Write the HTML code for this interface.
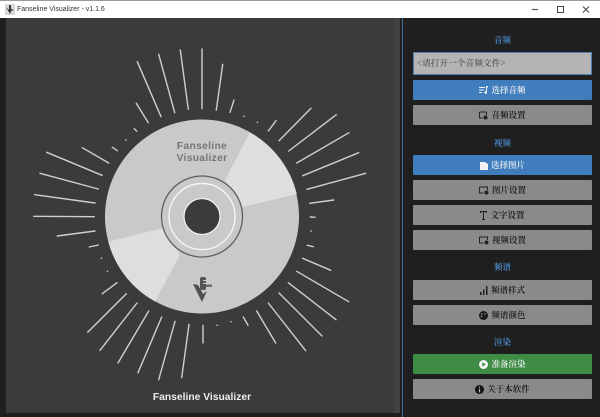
<!DOCTYPE html>
<html><head><meta charset="utf-8"><style>
html,body{margin:0;padding:0;width:600px;height:417px;overflow:hidden;background:#1f1f1f}
body{position:relative;font-family:"Liberation Sans","Noto Serif CJK SC",serif}
.a{position:absolute}
.tb{left:0;top:0;width:600px;height:18px;background:#fff;border-top:1px solid #9a9a9a;box-sizing:border-box}
.tt{left:17px;top:5px;font:7px/9px "Liberation Sans",sans-serif;color:#333;white-space:nowrap}
.h{left:413px;width:179px;text-align:center;font:600 8.500px/12px "Noto Serif CJK SC",serif;color:#4f94dc}
.b{left:413px;width:179px;height:20px;box-sizing:border-box;border-radius:1px;background:#8a8a8a;color:#111;display:flex;align-items:center;justify-content:center;font:600 8.500px/20px "Noto Serif CJK SC",serif;gap:3px;white-space:nowrap}
.b svg{display:block;flex:none}
.bl{background:#3f7dbd;color:#f2f2f2}
.gr{background:#3f8c47;color:#f2f2f2}
.in{left:413px;top:52px;width:179px;height:23px;box-sizing:border-box;background:#b4b4b4;border:1px solid #4f80b4;color:#4a4a4a;font:500 8.700px/21px "Noto Serif CJK SC",serif;padding-left:3px;white-space:nowrap}
</style></head><body>
<div class="a tb"></div>
<svg class="a" style="left:5px;top:4px" width="10" height="11" viewBox="0 0 10 11"><rect width="10" height="11" fill="#d8d8d8"/><path d="M1 3l4 7 1-3 3-1-3-1V1H4v5z" fill="#333"/></svg>
<div class="a tt">Fanseline Visualizer - v1.1.6</div>
<svg class="a" style="left:525px;top:0" width="75" height="18" viewBox="0 0 75 18"><path d="M7 9.500h6" stroke="#555" stroke-width="1.200"/><rect x="32.500" y="6.500" width="6" height="6" fill="none" stroke="#444" stroke-width="1"/><path d="M58 6.500l6 6M64 6.500l-6 6" stroke="#444" stroke-width="1"/></svg>

<div class="a" style="left:6px;top:18px;width:388px;height:395px;background:#3b3b3b"></div>
<div class="a" style="left:394px;top:18px;width:6px;height:395px;background:#424242"></div>
<div class="a" style="left:402px;top:18px;width:1px;height:399px;background:#3f6f9f"></div>

<svg class="a" style="left:0;top:0" width="400" height="417" viewBox="0 0 400 417">
<g stroke="#cfcfcf" stroke-width="1.400" stroke-linecap="round" fill="none">
<path d="M137.300 61.700L161 116.700M158.700 54.300L174.700 112.700M180.300 50L188.300 109.300M136.300 103.300L148.300 122.700M134.300 128.700L136.700 131.300M125.700 140h.3M112.300 147.300L117.300 150.700M82.300 147.700L108.700 163M46.700 152.300L102 175.300M40 173.300L98.300 189M34.700 194.700L95 203M33.700 216.300L94.300 216.700"/>
<path d="M57.300 236L95 231M89.300 247L98.300 245M101.300 258.300h.3M107.300 271.300h.3M102.300 293.700L117 282.700M87.700 332.300L126.300 293.700M100 350.300L137 303M118 363L148.700 311M138 372.700L161.700 317M158.700 379.700L175 321.300M181.700 377.700L189 324.300"/>
<path d="M203 325.300V343M217 325.300h.3M230.700 321.700h.3M243.300 317L248 325.300M256.700 311L275.700 343M268.300 303L305.700 350.700M279 293L322 336M288.300 282.700L336 319.700M296.700 271.300L348.700 301.700M302.700 258.300L330.700 270.300M307.300 245.300L313.300 246.700M310.700 231h.3"/>
<path d="M202 49V108.700M222.700 64.300L216.300 110M234 100L230 112.300M244 116.300h.3M257.300 122.300h.3M276 120.700L268.300 131M311 108.300L279 140.700M336.300 114.700L288.700 151M349 132.700L296.700 163M358.700 152.700L302.700 175.700M365.700 173.300L307 189.300M333.700 200L309.700 203.300M310.300 217L315 217.300"/>
</g>
<circle cx="202" cy="216.500" r="97" fill="#c9c9c9"/>
<path d="M250 132.500A97 97 0 0 1 296.800 194L243 207 225 180Z" fill="#dedede"/>
<path d="M108.300 241.700A97 97 0 0 0 155 301.500L180 255 163 228Z" fill="#dedede"/>
<circle cx="202" cy="216.500" r="40.500" fill="#c9c9c9" stroke="#5f5f5f" stroke-width="1.300"/>
<circle cx="202" cy="216.500" r="33" fill="none" stroke="#f4f4f4" stroke-width="1.400"/>
<circle cx="202" cy="216.500" r="18" fill="#3b3b3b" stroke="#f4f4f4" stroke-width="1.200"/>
<text x="202" y="149" text-anchor="middle" font-family="Liberation Sans" font-weight="bold" font-size="10.300" fill="#757575" letter-spacing=".3">Fanseline</text>
<text x="202" y="161" text-anchor="middle" font-family="Liberation Sans" font-weight="bold" font-size="10.300" fill="#757575" letter-spacing=".3">Visualizer</text>
<path d="M193 284L198 285 203 294 207 291 202 302Z" fill="#4f4f4f"/>
<rect x="200" y="277" width="6" height="13" rx="2" fill="#555"/>
<path d="M203 280.500h3M203 283.500h3" stroke="#c9c9c9" stroke-width="1"/>
<rect x="206" y="284.500" width="6" height="2.400" fill="#666"/>
<text x="202" y="400" text-anchor="middle" font-family="Liberation Sans" font-weight="bold" font-size="10.300" fill="#ececec">Fanseline Visualizer</text>
</svg>

<div class="a h" style="top:34px">音频</div>
<div class="a in">&lt;请打开一个音频文件&gt;</div>
<div class="a b bl" style="top:80px"><svg width="9" height="8" viewBox="0 0 9 8"><path d="M0 1h6v1H0zM0 3.500h5v1H0zM0 6h3v1H0zM7 0h2v1.500H8V6.500a1.300 1.300 0 1 1-1-1.200z" fill="#f2f2f2"/></svg>选择音频</div>
<div class="a b" style="top:105px"><svg width="9" height="9" viewBox="0 0 9 9"><path d="M.5 1h7v3M.5 1v6h3" fill="none" stroke="#222"/><circle cx="6.500" cy="6.500" r="2" fill="#222"/></svg>音频设置</div>

<div class="a h" style="top:137px">视频</div>
<div class="a b bl" style="top:155px"><svg width="8" height="9" viewBox="0 0 8 9"><path d="M0 1h5l3 2v6H0z" fill="#f2f2f2"/></svg>选择图片</div>
<div class="a b" style="top:180px"><svg width="10" height="9" viewBox="0 0 10 9"><path d="M.5 1h8v3M.5 1v6h4" fill="none" stroke="#222"/><circle cx="7.500" cy="6.500" r="2" fill="#222"/></svg>图片设置</div>
<div class="a b" style="top:205px"><svg width="7" height="9" viewBox="0 0 7 9"><path d="M0 0h7v2H6V1H4v7h1v1H2V8h1V1H1v1H0z" fill="#222"/></svg>文字设置</div>
<div class="a b" style="top:230px"><svg width="10" height="9" viewBox="0 0 10 9"><path d="M.5 1h8v3M.5 1v6h4" fill="none" stroke="#222"/><circle cx="7.500" cy="6.500" r="2" fill="#222"/></svg>视频设置</div>

<div class="a h" style="top:261px">频谱</div>
<div class="a b" style="top:280px"><svg width="8" height="9" viewBox="0 0 8 9"><path d="M0 6h1.500v3H0zM3 3.500h1.500V9H3zM6 0h1.500v9H6z" fill="#222"/></svg>频谱样式</div>
<div class="a b" style="top:305px"><svg width="9" height="9" viewBox="0 0 9 9"><circle cx="4.500" cy="4.500" r="4.500" fill="#1a1a1a"/><circle cx="3" cy="3" r=".8" fill="#999"/><circle cx="6" cy="3" r=".8" fill="#999"/><circle cx="2.500" cy="5.500" r=".8" fill="#999"/></svg>频谱颜色</div>

<div class="a h" style="top:336px">渲染</div>
<div class="a b gr" style="top:354px"><svg width="9" height="9" viewBox="0 0 9 9"><circle cx="4.500" cy="4.500" r="4.500" fill="#f4f4f4"/><path d="M3.300 2.300L6.800 4.500 3.300 6.700z" fill="#3f8c47"/></svg>准备渲染</div>
<div class="a b" style="top:379px"><svg width="9" height="9" viewBox="0 0 9 9"><circle cx="4.500" cy="4.500" r="4.500" fill="#111"/><path d="M3.900 1.500h1.200v1.200H3.900zM3.900 3.700h1.200v3.800H3.900z" fill="#bbb"/></svg>关于本软件</div>
</body></html>
